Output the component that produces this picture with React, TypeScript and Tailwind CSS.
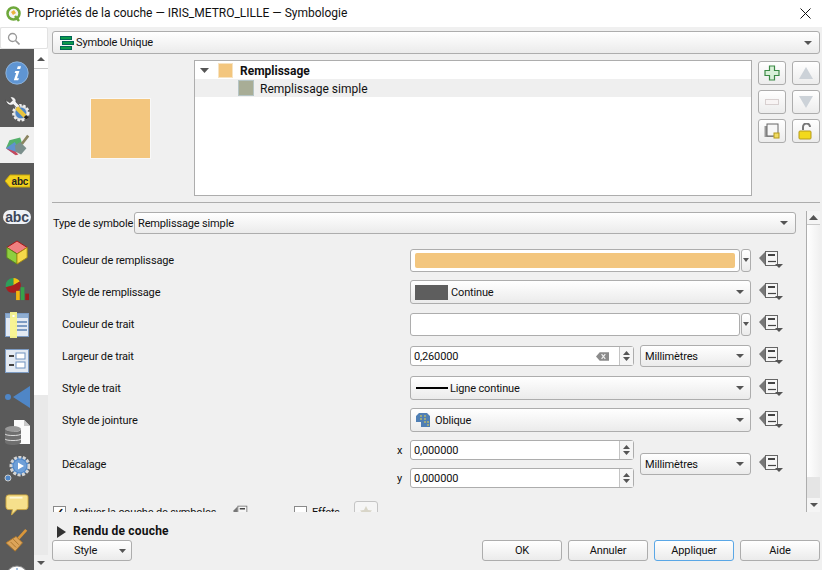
import React from "react";

const Caret = ({ className = "h-[4px] w-[8px]" }: { className?: string }) => (
	<svg viewBox="0 0 11 6" preserveAspectRatio="none" className={className}>
		<path d="M0 0h11L5.500 6z" fill="#555" />
	</svg>
);

const DataDefined = ({ small = false }: { small?: boolean }) => (
	<svg width="24" height="20" viewBox="0 0 24 20" className={small ? "h-[15px] w-[18px]" : ""}>
		<path d="M0 8l6-6v13z" fill="#777" />
		<rect x="6.500" y="1.500" width="12" height="14" fill="#f6f6f6" stroke="#666" />
		<path d="M9 5h7" stroke="#444" strokeWidth="2" />
		<path d="M9 11.500h8" stroke="#444" strokeWidth="1.200" />
		<path d="M16 14h8l-4 4z" fill="#555" />
	</svg>
);

const Combo = ({ children, className = "" }: { children?: React.ReactNode; className?: string }) => (
	<div className={`flex items-center justify-between rounded-[3px] border border-[#adadad] bg-linear-to-b from-white to-[#ebebeb] pr-[6px] ${className}`}>
		<div className="flex min-w-0 items-center">{children}</div>
		<Caret />
	</div>
);

const Spin = () => (
	<div className="flex h-full w-[14px] shrink-0 flex-col items-center justify-center gap-[2px] border-l border-[#c4c4c4] bg-[#f5f5f5]">
		<svg width="7" height="4" viewBox="0 0 9 5"><path d="M0 5h9L4.500 0z" fill="#555" /></svg>
		<svg width="7" height="4" viewBox="0 0 9 5"><path d="M0 0h9L4.500 5z" fill="#555" /></svg>
	</div>
);

const SpinBox = ({ value, clear = false }: { value: string; clear?: boolean }) => (
	<div className="flex h-[20px] w-[224px] items-center rounded-[3px] border border-[#adadad] bg-white">
		<span className="flex-1 pl-[3px]">{value}</span>
		{clear && (
			<svg width="13" height="9" viewBox="0 0 14 9" className="mr-[10px]">
				<path d="M0 4.500L4 0h10v9H4z" fill="#8b8b8b" />
				<path d="M6 2l4 5M10 2L6 7" stroke="#eee" strokeWidth="1.300" />
			</svg>
		)}
		<Spin />
	</div>
);

const ColorButton = ({ color }: { color: string }) => (
	<div className="flex h-[23px] w-[341px] gap-px">
		<div className="flex h-full w-[330px] items-center rounded-[3px] border border-[#adadad] bg-white px-[4px]">
			<div className={`h-[15px] w-full rounded-[2px] ${color}`} />
		</div>
		<div className="flex h-full flex-1 items-center justify-center rounded-[3px] border border-[#adadad] bg-linear-to-b from-white to-[#ebebeb]">
			<Caret className="h-[4px] w-[6px]" />
		</div>
	</div>
);

const FormRow = ({ label, children }: { label: string; children: React.ReactNode }) => (
	<div className="flex h-[32px] items-center">
		<div className="w-[358px] pl-[10px]">{label}</div>
		<div className="flex w-[341px] items-center">{children}</div>
		<div className="ml-[8px]"><DataDefined /></div>
	</div>
);

const SideButton = ({ children }: { children: React.ReactNode }) => (
	<div className="flex h-[24px] w-[28px] items-center justify-center rounded-[3px] border border-[#adadad] bg-linear-to-b from-white to-[#ececec]">
		{children}
	</div>
);

const DialogButton = ({ label, focused = false }: { label: string; focused?: boolean }) => (
	<div className={`flex h-[21px] w-[80px] items-center justify-center rounded-[3px] border bg-linear-to-b from-white to-[#ebebeb] ${focused ? "border-[#5aa7e6]" : "border-[#adadad]"}`}>
		{label}
	</div>
);

const sideIcons: React.ReactNode[] = [
	<svg width="24" height="24" viewBox="0 0 30 30">
		<circle cx="15" cy="15" r="14" fill="#5f95d3" stroke="#9bbce0" />
		<path d="M16 6.500h4l-1 3.500h-4zM13 12.500h5l-3 9h2.500l-1 2.500H11l3-9h-2z" fill="#fff" />
	</svg>,
	<svg width="25" height="25" viewBox="0 0 30 30">
		<circle cx="19" cy="19" r="9" fill="#cfd3d6" stroke="#eee" strokeWidth="3" strokeDasharray="3 2" />
		<circle cx="19" cy="19" r="6.500" fill="#4f86c6" />
		<path d="M1 4c1 5 5 7 9 5l5 5 3-3-5-5c1-4-3-7-7-6l3 4-3 3z" fill="#f2f2f2" stroke="#333" strokeWidth="0.600" />
		<path d="M14 13l10 10" stroke="#e8c33c" strokeWidth="5" />
		<path d="M24 23l3 3" stroke="#222" strokeWidth="4" />
	</svg>,
	<svg width="27" height="25" viewBox="0 0 28 28">
		<path d="M5 8l12-3 3 9-6 4-13-1z" fill="#55b06a" />
		<path d="M1 17l10-7 3 6-3 8z" fill="#5f92cf" />
		<path d="M1 17l11 8 3-1-3-3z" fill="#c74a5d" />
		<path d="M11 14l6-4 7 7-6 7-6-3z" fill="#7b8f8c" />
		<path d="M19 12l7-9" stroke="#8b8460" strokeWidth="3" />
	</svg>,
	<svg width="25" height="14" viewBox="0 0 25 14">
		<path d="M0 7l5-6h20v12H5z" fill="#f3d21e" stroke="#c7a60a" />
		<text x="6.500" y="10.500" fontSize="10" fontWeight="700" fontFamily="Liberation Sans, sans-serif" fill="#222">abc</text>
	</svg>,
	<div className="rounded-[7px] bg-[#eef1f6] px-[2px] font-['Liberation_Sans',sans-serif] text-[14px] leading-[14px] font-bold tracking-[-0.2px] text-[#3c4658]">abc</div>,
	<svg width="24" height="26" viewBox="0 0 26 28">
		<path d="M13 1l11 7-11 7L2 8z" fill="#f08080" stroke="#a11" />
		<path d="M2 8l11 7v11L2 19z" fill="#8fcf3f" stroke="#5a8a1a" />
		<path d="M24 8l-11 7v11l11-7z" fill="#f5d94a" stroke="#a98f10" />
	</svg>,
	<svg width="24" height="24" viewBox="0 0 26 26">
		<path d="M9 9V1a8 8 0 0 1 7 4z" fill="#f1c40f" />
		<path d="M9 9L1 11a8 8 0 0 1 8-10z" fill="#2e9e5b" />
		<path d="M9 9l7-4a8 8 0 0 1-7 12a8 8 0 0 1-8-6z" fill="#a81f1f" />
		<rect x="12" y="15" width="4" height="10" fill="#f5b50f" />
		<rect x="17" y="11" width="4" height="14" fill="#37a34a" />
		<rect x="22" y="18" width="4" height="7" fill="#9c1c1c" />
	</svg>,
	<svg width="24" height="26" viewBox="0 0 24 26">
		<rect x="0.500" y="1.500" width="23" height="23" fill="#e3eaf3" stroke="#7d9cc4" />
		<rect x="1" y="2" width="22" height="4" fill="#8faed2" />
		<path d="M10 10h12M10 14h12M10 18h12" stroke="#7d9cc4" strokeWidth="2" />
		<rect x="5" y="0" width="7" height="26" fill="#f8f48e" opacity="0.95" />
		<rect x="7.500" y="3" width="2" height="2" fill="#fff" />
	</svg>,
	<svg width="24" height="24" viewBox="0 0 24 24">
		<rect x="0.500" y="0.500" width="23" height="23" fill="#e3eaf3" stroke="#7d9cc4" />
		<path d="M4 7h5M4 16h5" stroke="#444" strokeWidth="2" />
		<rect x="11" y="4" width="9" height="6" fill="#fff" stroke="#6f92c0" />
		<rect x="11" y="13" width="9" height="6" fill="#fff" stroke="#6f92c0" />
	</svg>,
	<svg width="26" height="22" viewBox="0 0 26 22">
		<path d="M26 0v22L9 11z" fill="#4f86c6" />
		<circle cx="4" cy="11" r="3" fill="#4f86c6" />
	</svg>,
	<svg width="26" height="26" viewBox="0 0 26 26">
		<path d="M10 0h10l6 6v18H10z" fill="#fbfbfb" />
		<path d="M20 0v6h6z" fill="#c9c9c9" />
		<ellipse cx="9" cy="9" rx="8" ry="3" fill="#999" />
		<path d="M1 9v13c0 2 3.500 3 8 3s8-1 8-3V9c0 2-3.500 3-8 3s-8-1-8-3z" fill="#6f6f6f" />
		<path d="M1 14c1 2 15 2 16 0M1 19c1 2 15 2 16 0" stroke="#ddd" fill="none" />
	</svg>,
	<svg width="26" height="26" viewBox="0 0 26 26">
		<circle cx="16" cy="10" r="9" fill="#4f86c6" stroke="#d5d5d5" strokeWidth="3" strokeDasharray="3 1.500" />
		<circle cx="16" cy="10" r="6.500" fill="#6e9fd8" />
		<path d="M14 6.500l6 3.500-6 3.500z" fill="#fff" />
		<circle cx="4" cy="22" r="3" fill="#4f86c6" stroke="#ccc" />
	</svg>,
	<svg width="24" height="22" viewBox="0 0 24 24">
		<path d="M3 1h19q2 0 2 2v11q0 3-3 3H12l-6 6 1-6H3q-3 0-3-3V4q0-3 3-3z" fill="#f6e08c" stroke="#cfa93f" />
		<path d="M4 4h14" stroke="#fdf7d4" strokeWidth="2" />
	</svg>,
	<svg width="24" height="24" viewBox="0 0 24 26">
		<path d="M22 1L13 11" stroke="#d9963a" strokeWidth="3" />
		<path d="M11 8l7 7-8 9L0 15z" fill="#dca45a" stroke="#a8742a" />
		<path d="M5 14l6 6M8 11l6 6" stroke="#a8742a" />
	</svg>,
	<svg width="24" height="24" viewBox="0 0 24 24">
		<circle cx="12" cy="12" r="11" fill="#fff" stroke="#8a8a8a" />
		<path d="M12 3v18M3 12h18" stroke="#4f86c6" />
	</svg>,
];

export default function App() {
	return (
		<div className="flex h-[570px] w-[822px] flex-col overflow-hidden whitespace-nowrap bg-[#f0f0f0] font-['Roboto',sans-serif] text-[11px] leading-[15px] tracking-[-0.15px] text-[#111]">
			{/* title bar */}
			<div className="flex h-[27px] shrink-0 items-center bg-white pl-[6px] pr-[11px] text-[12px] tracking-normal">
				<svg width="16" height="16" viewBox="0 0 16 16">
					<circle cx="7.500" cy="7.500" r="6" fill="#f4f4f4" stroke="#6da83a" strokeWidth="2.500" />
					<path d="M5 6l3-2 2 3-3 2z" fill="#e8b33c" />
					<path d="M9 10l4 5" stroke="#6da83a" strokeWidth="2.500" />
				</svg>
				<span className="ml-[5px] flex-1">Propriétés de la couche — IRIS_METRO_LILLE — Symbologie</span>
				<svg width="11" height="11" viewBox="0 0 11 11">
					<path d="M0.500 0.500l10 10M10.500 0.500l-10 10" stroke="#111" />
				</svg>
			</div>

			<div className="flex min-h-0 flex-1">
				{/* left column */}
				<div className="flex w-[48px] shrink-0 flex-col">
					<div className="flex h-[22px] shrink-0 items-center rounded-[2px] border border-[#e2e2e2] bg-white pl-[6px]">
						<svg width="13" height="13" viewBox="0 0 13 13">
							<circle cx="5.500" cy="5.500" r="4" fill="none" stroke="#999" strokeWidth="1.300" />
							<path d="M8.500 8.500l4 4" stroke="#999" strokeWidth="1.600" />
						</svg>
					</div>
					<div className="flex min-h-0 flex-1">
						<div className="flex w-[34px] shrink-0 flex-col overflow-hidden bg-[#5a5a5a] pt-[6px]">
							{sideIcons.map((icon, i) => (
								<div key={i} className={`flex h-[36px] shrink-0 items-center justify-center ${i === 2 ? "bg-[#f0f0f0]" : ""}`}>
									{icon}
								</div>
							))}
						</div>
						<div className="flex w-[14px] shrink-0 flex-col">
							<div className="flex h-[20px] items-center justify-center border-b border-[#c8c8c8] bg-white">
								<Caret className="h-[4px] w-[8px] rotate-180" />
							</div>
							<div className="h-[326px] bg-white" />
							<div className="flex-1 bg-[#e9e9e9]" />
							<div className="flex h-[15px] items-center justify-center bg-[#f0f0f0]">
								<Caret />
							</div>
						</div>
					</div>
				</div>

				{/* main column */}
				<div className="flex min-w-0 flex-1 flex-col pl-[4px] pr-[2px] pt-[4px]">
					<Combo className="h-[23px] shrink-0 pl-[7px] pr-[7px]">
						<svg width="14" height="14" viewBox="0 0 14 14">
							<rect x="0.500" y="0.500" width="11" height="3" fill="#0b9b4a" stroke="#065" />
							<rect x="2.500" y="5.500" width="11" height="3" fill="#0b9b4a" stroke="#065" />
							<rect x="0.500" y="10.500" width="11" height="3" fill="#0b9b4a" stroke="#065" />
						</svg>
						<span className="ml-[2px]">Symbole Unique</span>
					</Combo>

					{/* symbol tree */}
					<div className="mt-[6px] flex h-[136px] shrink-0">
						<div className="flex w-[142px] shrink-0 items-center pl-[38px]">
							<div className="h-[61px] w-[61px] border border-[#f8f8f8] bg-[#f3c67e]" />
						</div>
						<div className="w-[558px] shrink-0 border border-[#adadad] bg-white text-[12px] leading-[18px] tracking-normal">
							<div className="flex h-[18px] items-center pl-[5px]">
								<Caret className="h-[5px] w-[9px]" />
								<div className="ml-[9px] h-[15px] w-[15px] border border-[#f7e3c1] bg-[#f3c67e]" />
								<span className="ml-[7px] mt-[2px] font-bold">Remplissage</span>
							</div>
							<div className="flex h-[18px] items-center bg-[#efefef] pl-[43px]">
								<div className="h-[16px] w-[16px] border border-[#b5c4c4] bg-[#a8ad96]" />
								<span className="ml-[6px] mt-[2px]">Remplissage simple</span>
							</div>
						</div>
						<div className="ml-[6px] grid grid-cols-[28px_28px] grid-rows-[24px_24px_24px] gap-x-[6px] gap-y-[5px] pt-px">
							<SideButton>
								<svg width="16" height="16" viewBox="0 0 16 16">
									<path d="M5.500 1h5v4.500H15v5h-4.500V15h-5v-4.500H1v-5h4.500z" fill="#d8f0d8" stroke="#3c8a46" strokeWidth="1.200" />
								</svg>
							</SideButton>
							<SideButton>
								<svg width="16" height="16" viewBox="0 0 16 16"><path d="M1 14h14L8 2z" fill="#ccd2d8" /></svg>
							</SideButton>
							<SideButton>
								<svg width="14" height="6" viewBox="0 0 14 6"><rect x="0.500" y="0.500" width="13" height="5" fill="#f8f4f4" stroke="#d8d0d0" /></svg>
							</SideButton>
							<SideButton>
								<svg width="16" height="16" viewBox="0 0 16 16"><path d="M1 2h14L8 14z" fill="#ccd2d8" /></svg>
							</SideButton>
							<SideButton>
								<svg width="16" height="16" viewBox="0 0 16 16">
									<rect x="0.500" y="3" width="9" height="11" fill="#999" />
									<rect x="3" y="1" width="11" height="12" fill="#f7f7f7" stroke="#666" />
									<rect x="10" y="10" width="5" height="5" fill="#f0dc64" stroke="#b59a1c" />
								</svg>
							</SideButton>
							<SideButton>
								<svg width="16" height="17" viewBox="0 0 16 17">
									<path d="M5 7V4a3.500 3.500 0 0 1 7 0" fill="none" stroke="#777" strokeWidth="2" />
									<rect x="1" y="8" width="12" height="8" rx="1" fill="#f2d91c" stroke="#b59a1c" />
								</svg>
							</SideButton>
						</div>
					</div>

					<div className="mt-[6px] h-px shrink-0 bg-[#adadad]" />

					{/* settings */}
					<div className="flex h-[309px] shrink-0">
						<div className="w-[754px] shrink-0 overflow-hidden">
							<div className="mt-[9px] flex items-center">
								<span className="w-[82px] shrink-0 pl-px">Type de symbole</span>
								<Combo className="h-[22px] w-[662px] pl-[3px] pr-[7px]">Remplissage simple</Combo>
							</div>
							<div className="mt-[10px]">
								<FormRow label="Couleur de remplissage">
									<ColorButton color="bg-[#f3c67e]" />
								</FormRow>
								<FormRow label="Style de remplissage">
									<Combo className="h-[24px] w-[341px] pl-[4px]">
										<div className="h-[15px] w-[33px] bg-[#5e5e5e]" />
										<span className="ml-[3px]">Continue</span>
									</Combo>
								</FormRow>
								<FormRow label="Couleur de trait">
									<ColorButton color="bg-white" />
								</FormRow>
								<FormRow label="Largeur de trait">
									<SpinBox value="0,260000" clear />
									<Combo className="ml-[6px] h-[22px] w-[111px] pl-[4px]">Millimètres</Combo>
								</FormRow>
								<FormRow label="Style de trait">
									<Combo className="h-[24px] w-[341px] pl-[5px]">
										<div className="h-[2px] w-[32px] bg-black" />
										<span className="ml-[2px]">Ligne continue</span>
									</Combo>
								</FormRow>
								<FormRow label="Style de jointure">
									<Combo className="h-[24px] w-[341px] pl-[5px]">
										<svg width="14" height="14" viewBox="0 0 14 14">
											<path d="M0 3l3-3h8l3 3v11H5V9H0z" fill="#4f7fb5" />
											<path d="M4 3h2M8 3h2M4 6h2M8 6h2M8 9h2M11 9h2M11 12h2" stroke="#e8d24a" />
										</svg>
										<span className="ml-[5px]">Oblique</span>
									</Combo>
								</FormRow>
								<div className="flex h-[56px] items-center">
									<div className="w-[345px] pl-[10px]">Décalage</div>
									<div className="flex w-[13px] flex-col gap-[13px]">
										<span>x</span>
										<span>y</span>
									</div>
									<div className="flex w-[224px] flex-col gap-[8px]">
										<SpinBox value="0,000000" />
										<SpinBox value="0,000000" />
									</div>
									<Combo className="ml-[6px] h-[22px] w-[111px] pl-[4px]">Millimètres</Combo>
									<div className="ml-[8px]"><DataDefined /></div>
								</div>
							</div>
							<div className="mt-[8px] flex h-[24px] items-center">
								<div className="ml-px flex h-[13px] w-[13px] items-center justify-center border border-[#8a8a8a] bg-white text-[11px] font-bold">✓</div>
								<span className="ml-[6px] w-[161px]">Activer la couche de symboles</span>
								<DataDefined small />
								<div className="ml-[43px] h-[13px] w-[13px] border border-[#8a8a8a] bg-white" />
								<span className="ml-[5px] w-[42px]">Effets</span>
								<div className="flex h-[22px] w-[24px] items-center justify-center rounded-[3px] border border-[#c4c4c4] bg-[#f5f5f5]">
									<svg width="14" height="14" viewBox="0 0 14 14"><path d="M7 1l2 4 4 .5-3 3 1 4.500-4-2-4 2 1-4.500-3-3L5 5z" fill="#d8d5c8" /></svg>
								</div>
							</div>
						</div>
						<div className="mt-[8px] flex h-[301px] w-[14px] shrink-0 flex-col border-l border-[#adadad]">
							<div className="flex h-[14px] items-center justify-center border-b border-[#c8c8c8] bg-[#f5f5f5]">
								<Caret className="h-[5px] w-[9px] rotate-180" />
							</div>
							<div className="h-[252px] bg-linear-to-r from-white to-[#f0f0f0]" />
							<div className="h-[21px] bg-[#e5e5e5]" />
							<div className="flex flex-1 items-center justify-center bg-[#f5f5f5]">
								<Caret />
							</div>
						</div>
					</div>

					{/* layer rendering */}
					<div className="flex h-[24px] shrink-0 items-center pl-[5px] pt-[15px] text-[12px] tracking-[0.2px]">
						<svg width="9" height="12" viewBox="0 0 9 12"><path d="M0 0l9 6-9 6z" fill="#333" /></svg>
						<span className="ml-[7px] font-bold">Rendu de couche</span>
					</div>

					<div className="mt-[4px] flex shrink-0 items-center">
						<div className="flex h-[21px] w-[80px] items-center justify-between rounded-[3px] border border-[#adadad] bg-linear-to-b from-white to-[#ebebeb] pl-[21px] pr-[5px]">
							Style
							<Caret className="h-[4px] w-[7px]" />
						</div>
						<div className="ml-auto flex gap-[6px]">
							<DialogButton label="OK" />
							<DialogButton label="Annuler" />
							<DialogButton label="Appliquer" focused />
							<DialogButton label="Aide" />
						</div>
					</div>
				</div>
			</div>
		</div>
	);
}
